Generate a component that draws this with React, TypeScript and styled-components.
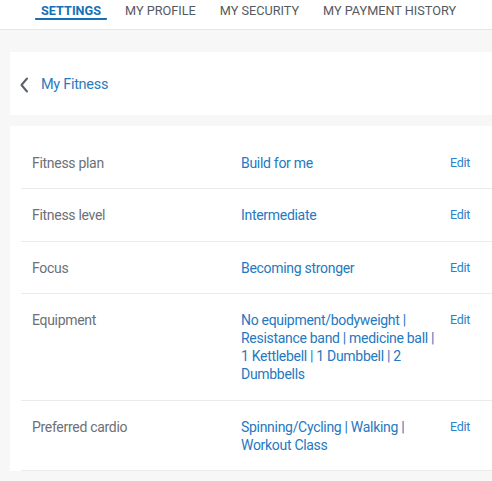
import React from "react";
import styled, { createGlobalStyle } from "styled-components";

const Global = createGlobalStyle`
  html, body { margin: 0; padding: 0; background: #f7f7f7; }
  body { font-family: Roboto, "Liberation Sans", sans-serif; -webkit-font-smoothing: antialiased; }
  * { box-sizing: border-box; }
`;

const Page = styled.div`
  width: 492px;
  height: 481px;
  overflow: hidden;
  background: #f7f7f7;
  display: flex;
  flex-direction: column;
`;

const TabBar = styled.nav`
  height: 30px;
  background: #fff;
  border-bottom: 1px solid #e6e6e6;
  display: flex;
  align-items: flex-start;
  gap: 12px;
  padding-left: 35px;
  flex-shrink: 0;
`;

const Tab = styled.div<{ $active?: boolean }>`
  font-size: 12.7px;
  line-height: 16px;
  padding: 3px 6px 0;
  height: 20px;
  font-weight: ${(p) => (p.$active ? 700 : 400)};
  color: ${(p) => (p.$active ? "#1570b8" : "#555a60")};
  border-bottom: 2px solid ${(p) => (p.$active ? "#1570b8" : "transparent")};
  border-radius: 1px;
  white-space: nowrap;
`;

const Content = styled.div`
  display: flex;
  flex-direction: column;
  gap: 11px;
  padding: 22px 0 0 10px;
`;

const BackCard = styled.div`
  background: #fff;
  height: 63px;
  display: flex;
  align-items: center;
  gap: 12px;
  padding: 2px 0 0 9px;
`;

const BackLabel = styled.span`
  font-size: 14.5px;
  color: #2a7bc0;
  letter-spacing: -0.3px;
`;

const ListCard = styled.div`
  background: #fff;
  padding: 11px 0 0 11px;
  flex: 1;
`;

const Row = styled.div`
  display: grid;
  grid-template-columns: 209px 209px 1fr;
  padding: 17px 0 16.4px 11px;
  border-bottom: 1px solid #ebebeb;
  font-size: 14px;
  line-height: 18px;
  letter-spacing: -0.3px;
`;

const Label = styled.div`
  color: #6d7075;
`;

const Value = styled.div`
  color: #2479c1;
  padding-right: 8px;
`;

const EditLink = styled.a`
  color: #2a83c8;
  font-size: 12.5px;
  text-decoration: none;
`;

const Chevron = () => (
  <svg width="10" height="16" viewBox="0 0 10 16" fill="none">
    <path d="M8 1.5 L2.5 8 L8 14.5" stroke="#5b6067" strokeWidth="2" strokeLinecap="round" strokeLinejoin="round" />
  </svg>
);

const rows = [
  { label: "Fitness plan", value: "Build for me" },
  { label: "Fitness level", value: "Intermediate" },
  { label: "Focus", value: "Becoming stronger" },
  { label: "Equipment", value: "No equipment/bodyweight | Resistance band | medicine ball | 1 Kettlebell | 1 Dumbbell | 2 Dumbbells" },
  { label: "Preferred cardio", value: "Spinning/Cycling | Walking | Workout Class" },
];

export default function App() {
  return (
    <Page>
      <Global />
      <TabBar>
        <Tab $active>SETTINGS</Tab>
        <Tab>MY PROFILE</Tab>
        <Tab>MY SECURITY</Tab>
        <Tab>MY PAYMENT HISTORY</Tab>
      </TabBar>
      <Content>
        <BackCard>
          <Chevron />
          <BackLabel>My Fitness</BackLabel>
        </BackCard>
        <ListCard>
          {rows.map((r) => (
            <Row key={r.label}>
              <Label>{r.label}</Label>
              <Value>{r.value}</Value>
              <EditLink>Edit</EditLink>
            </Row>
          ))}
        </ListCard>
      </Content>
    </Page>
  );
}
